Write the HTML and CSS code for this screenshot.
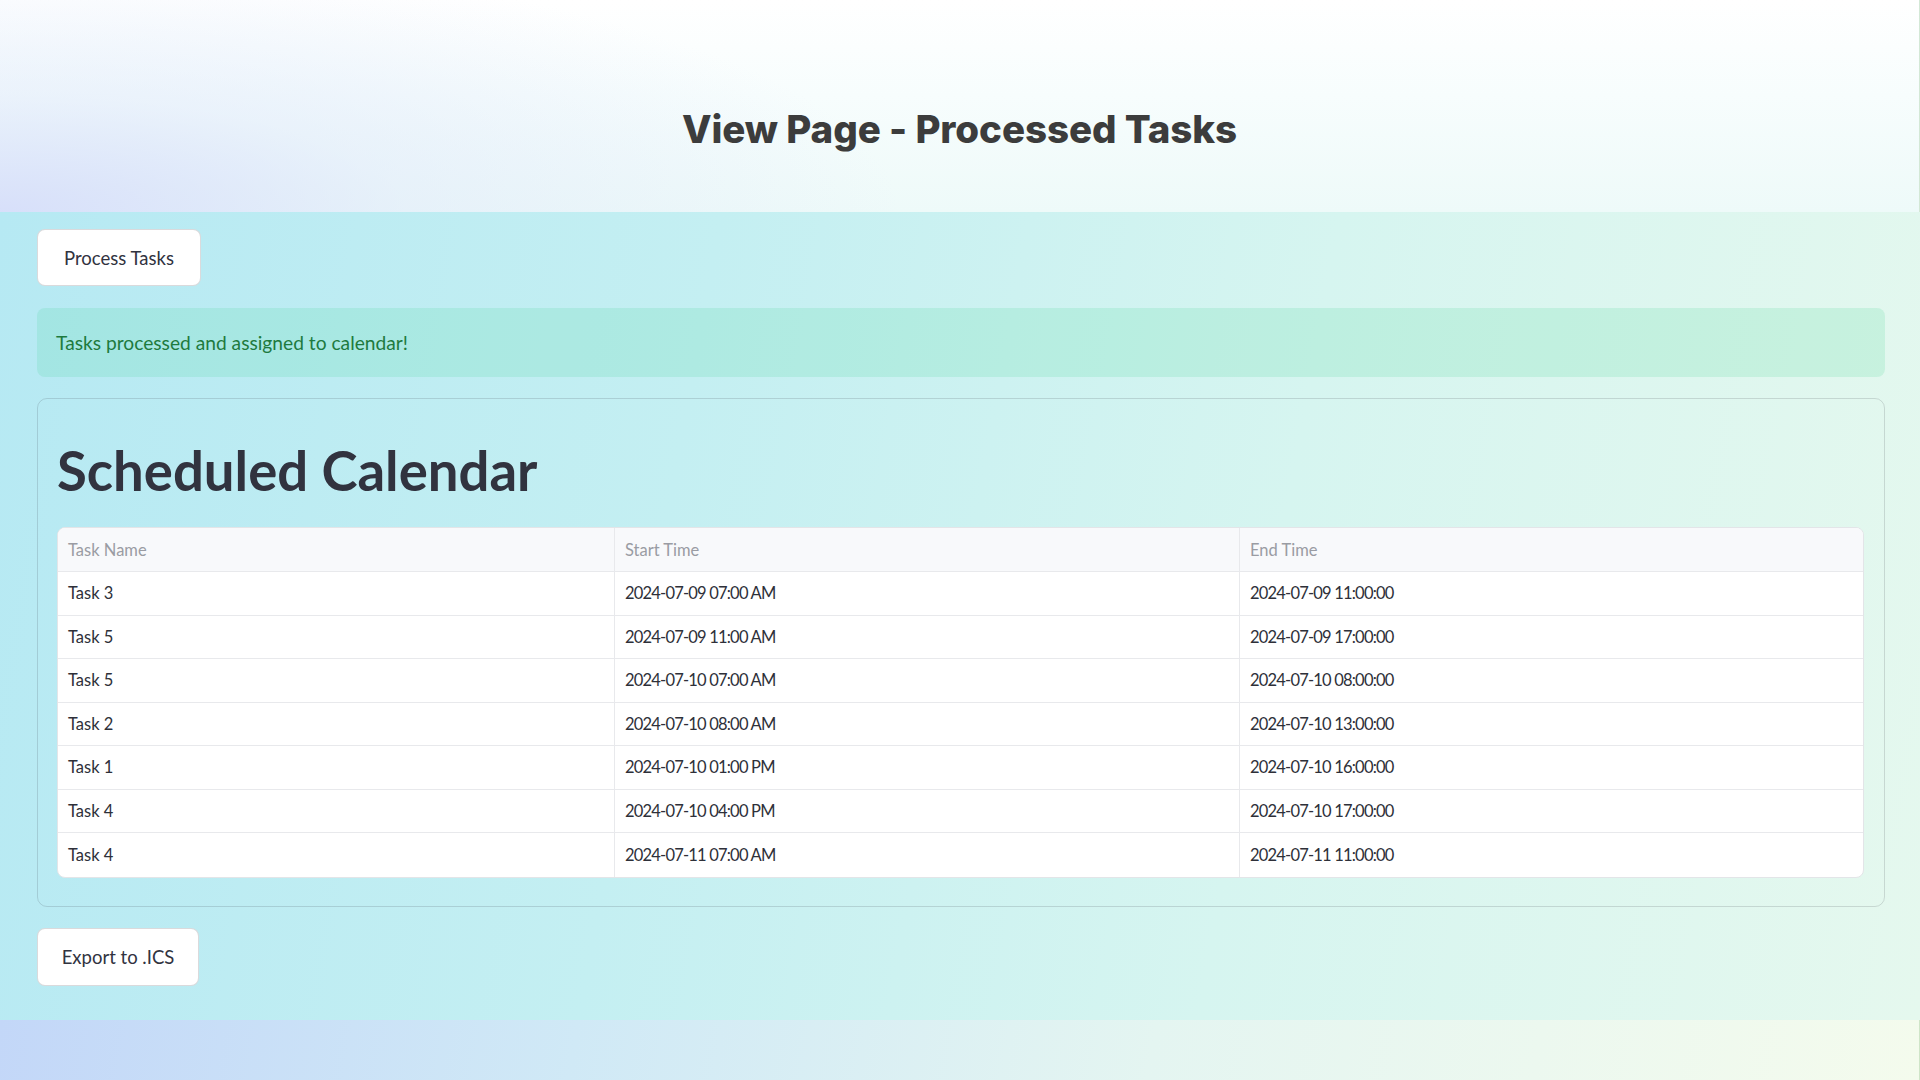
FILE: index.html
```html
<!DOCTYPE html>
<html lang="en">
<head>
<meta charset="utf-8">
<title>View Page - Processed Tasks</title>
<link rel="stylesheet" href="styles.css">
</head>
<body>
<header class="page-header">
  <h1 class="page-title">View Page - Processed Tasks</h1>
</header>
<main class="page-main">
  <button class="btn">Process Tasks</button>
  <div class="alert-success">Tasks processed and assigned to calendar!</div>
  <section class="card">
    <h2 class="card-title">Scheduled Calendar</h2>
    <div class="grid-wrap">
      <table class="grid">
        <colgroup>
          <col class="col-name">
          <col class="col-start">
          <col class="col-end">
        </colgroup>
        <thead>
          <tr><th>Task Name</th><th>Start Time</th><th>End Time</th></tr>
        </thead>
        <tbody>
          <tr><td>Task 3</td><td class="dt">2024-07-09 07:00 AM</td><td class="dt">2024-07-09 11:00:00</td></tr>
          <tr><td>Task 5</td><td class="dt">2024-07-09 11:00 AM</td><td class="dt">2024-07-09 17:00:00</td></tr>
          <tr><td>Task 5</td><td class="dt">2024-07-10 07:00 AM</td><td class="dt">2024-07-10 08:00:00</td></tr>
          <tr><td>Task 2</td><td class="dt">2024-07-10 08:00 AM</td><td class="dt">2024-07-10 13:00:00</td></tr>
          <tr><td>Task 1</td><td class="dt">2024-07-10 01:00 PM</td><td class="dt">2024-07-10 16:00:00</td></tr>
          <tr><td>Task 4</td><td class="dt">2024-07-10 04:00 PM</td><td class="dt">2024-07-10 17:00:00</td></tr>
          <tr><td>Task 4</td><td class="dt">2024-07-11 07:00 AM</td><td class="dt">2024-07-11 11:00:00</td></tr>
        </tbody>
      </table>
    </div>
  </section>
  <button class="btn btn-export">Export to .ICS</button>
</main>
<footer class="page-footer"></footer>
</body>
</html>
```
FILE: styles.css
```css
* { box-sizing: border-box; }

html, body {
  margin: 0;
  padding: 0;
  width: 1920px;
  height: 1080px;
  overflow: hidden;
}

body {
  font-family: "Lato", "Liberation Sans", sans-serif;
  color: #31333f;
  background: #e6f6f2;
}

.page-header {
  height: 212px;
  padding-top: 107px;
  background:
    radial-gradient(ellipse 900px 260px at 0% 100%, rgba(214, 222, 250, 0.95) 0%, rgba(222, 232, 250, 0.5) 45%, rgba(230, 245, 250, 0) 100%),
    linear-gradient(180deg, #ffffff 0%, #f7fdfd 45%, #eefaf9 100%);
  border-right: 1px solid #d3e8d6;
}

.page-title {
  margin: 0;
  text-align: center;
  font-family: "Inter", "Liberation Sans", sans-serif;
  font-weight: 800;
  font-size: 38.5px;
  line-height: 44px;
  color: #3c3c3c;
  letter-spacing: -0.1px;
}

.page-main {
  height: 808px;
  padding: 17px 35px 0 37px;
  display: flex;
  flex-direction: column;
  align-items: flex-start;
  background: linear-gradient(100deg, #b6e9f3 0%, #c4eff2 35%, #d6f5f0 65%, #e5f8ee 100%);
}

.btn {
  width: 164px;
  height: 57px;
  padding: 0;
  display: inline-flex;
  align-items: center;
  justify-content: center;
  white-space: nowrap;
  background: #ffffff;
  border: 1px solid rgba(49, 51, 63, 0.18);
  border-radius: 8px;
  font-family: "Lato", "Liberation Sans", sans-serif;
  font-size: 18.5px;
  color: #31333f;
}

.btn-export {
  width: 162px;
  height: 58px;
  margin-top: 21px;
}

.alert-success {
  align-self: stretch;
  margin-top: 22px;
  height: 69px;
  padding: 0 19px;
  display: flex;
  align-items: center;
  border-radius: 8px;
  background: rgba(60, 214, 140, 0.16);
  color: #1e7a3e;
  font-size: 19.2px;
}

.card {
  align-self: stretch;
  margin-top: 21px;
  height: 509px;
  padding: 38px 20px 0 19px;
  border: 1px solid rgba(49, 51, 63, 0.16);
  border-radius: 10px;
}

.card-title {
  margin: 0 0 23px 0;
  font-size: 54.5px;
  line-height: 67px;
  font-weight: 700;
  color: #31333f;
}

.grid-wrap {
  background: #ffffff;
  border: 1px solid #e3e5e8;
  border-radius: 8px;
  overflow: hidden;
}

.grid {
  width: 100%;
  border-collapse: separate;
  border-spacing: 0;
  table-layout: fixed;
  font-size: 16.5px;
}

.col-name { width: 557px; }
.col-start { width: 625px; }
.col-end { width: auto; }

.grid th,
.grid td {
  text-align: left;
  padding: 0 10px;
  border-bottom: 1px solid #e8e9ec;
  border-right: 1px solid #e8e9ec;
  white-space: nowrap;
}

.grid th:last-child,
.grid td:last-child { border-right: none; }

.grid tbody tr:last-child td { border-bottom: none; }

.grid th {
  height: 44px;
  background: #f8f9fb;
  font-weight: 400;
  color: #9a9ca3;
}

.grid td {
  height: 43.5px;
  color: #2e3039;
}

.grid td.dt {
  letter-spacing: -0.8px;
}

.page-footer {
  height: 60px;
  background: linear-gradient(100deg, #c3d7f8 0%, #d0e9f6 30%, #e4f5f1 60%, #f4fbed 100%);
  border-right: 1px solid #cfe5c8;
}
```
